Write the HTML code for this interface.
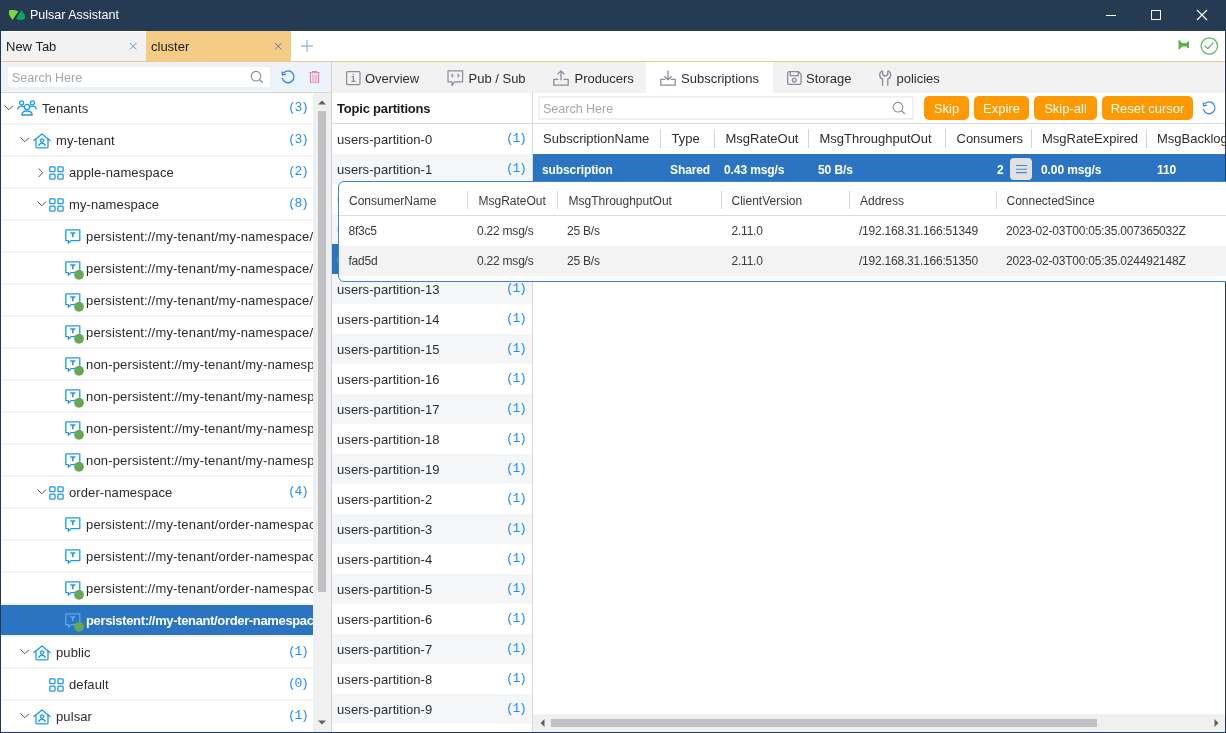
<!DOCTYPE html>
<html><head><meta charset="utf-8"><style>
*{margin:0;padding:0;box-sizing:border-box}
html,body{width:1226px;height:733px;overflow:hidden;background:#233a52;font-family:"Liberation Sans",sans-serif;font-size:13px;color:#333}
.a{position:absolute}
.t{position:absolute;white-space:nowrap}
.m{font-family:"Liberation Mono",monospace;color:#1f90fb;font-size:13px;letter-spacing:-1.3px}
svg{position:absolute;overflow:visible}
</style></head><body><div id="root" style="position:absolute;left:0;top:0;width:1226px;height:733px;overflow:hidden;will-change:transform">
<div class="a" style="left:0;top:0;width:1226px;height:31px;background:#243b53"></div>
<svg style="left:0;top:0" width="30" height="30" viewBox="0 0 30 30"><path d="M9 10.6 Q9.2 10 10 10 L14 9.9 Q16.5 10.3 18.3 11.4 L12.4 20 L9.6 15.6 Q9 14.8 9 14 Z" fill="#7dd63a"/><path d="M21.5 10 L25.1 15.8 V18.6 Q23.5 19.9 20.8 20 Q18 19.9 16.1 18.7 Z" fill="#09a857"/></svg>
<div class="t" style="left:30px;top:0;line-height:31px;font-size:12.5px;color:#fff">Pulsar Assistant</div>
<div class="a" style="left:1106px;top:15px;width:10px;height:1px;background:#fff"></div>
<div class="a" style="left:1151px;top:10px;width:10px;height:10px;border:1px solid #fff"></div>
<svg style="left:1197px;top:10px" width="10" height="10"><path d="M0 0L10 10M10 0L0 10" stroke="#fff" stroke-width="1.1"/></svg>
<div class="a" style="left:1px;top:31px;width:1224px;height:701px;background:#fff"></div>
<div class="a" style="left:1px;top:32px;width:145px;height:29px;background:#f2f2f2"></div>
<div class="t" style="left:6px;top:32px;line-height:29px;color:#222">New Tab</div>
<svg style="left:130px;top:43px" width="7" height="7"><path d="M0 0L6.5 6.5M6.5 0L0 6.5" stroke="#5b9bd9" stroke-width="1"/></svg>
<div class="a" style="left:146px;top:31px;width:145px;height:30px;background:#f4cc85"></div>
<div class="t" style="left:151px;top:32px;line-height:29px;color:#222">cluster</div>
<svg style="left:275px;top:43px" width="7" height="7"><path d="M0 0L6.5 6.5M6.5 0L0 6.5" stroke="#5d7fa6" stroke-width="1"/></svg>
<svg style="left:301px;top:40px" width="12" height="12"><path d="M6 0V12M0 6H12" stroke="#9cc0e6" stroke-width="1.4"/></svg>
<div class="a" style="left:1px;top:61px;width:1224px;height:1px;background:#f3c683"></div>
<svg style="left:1178px;top:40px" width="12" height="10" viewBox="0 0 12 10"><path d="M0.5 0 L2 0.6 L4 3 L8.6 3 L9.6 1.4 L11 1.2 L11 8.2 L9.6 8 L8.6 6.5 L4 6.5 L2 9 L0.5 9.5 Z" fill="#5db446"/></svg>
<svg style="left:1200px;top:37px" width="19" height="18" viewBox="0 0 19 18"><circle cx="9.3" cy="9" r="8.2" fill="none" stroke="#5cb85c" stroke-width="1.2"/><path d="M4.6 8.6 L7.7 11.6 L13.5 5.4" fill="none" stroke="#5cb85c" stroke-width="1.3"/></svg>
<div class="a" style="left:1px;top:62px;width:330px;height:30px;background:#edf3fb"></div>
<div class="a" style="left:1px;top:92px;width:330px;height:1px;background:#d5d9de"></div>
<div class="a" style="left:6px;top:65px;width:266px;height:24px;background:#f0f0f0"></div>
<div class="a" style="left:8px;top:67px;width:262px;height:20px;background:#fff"></div>
<div class="t" style="left:12px;top:68px;line-height:20px;font-size:12.5px;color:#a6a6a6">Search Here</div>
<svg style="left:250px;top:70px" width="14" height="14" viewBox="0 0 14 14"><circle cx="6" cy="6.2" r="4.8" fill="none" stroke="#8c8c8c" stroke-width="1.1"/><path d="M9.5 9.7 L12.8 12.8" stroke="#8c8c8c" stroke-width="1.2"/></svg>
<svg style="left:281px;top:70px" width="14" height="14" viewBox="0 0 14 14"><path d="M1.3 8.2 A5.9 5.9 0 1 0 2.4 3.2" fill="none" stroke="#2f80d6" stroke-width="1.3"/><path d="M1 1.5 L1.6 5 L5 4.2" fill="none" stroke="#2f80d6" stroke-width="1.3"/></svg>
<svg style="left:309px;top:71px" width="11" height="12" viewBox="0 0 11 12"><path d="M0.3 1.7 H10.7 M3.5 1.7 V0.5 H7.5 V1.7" fill="none" stroke="#e27ba1" stroke-width="1.1"/><path d="M1.4 2.2 V11.3 H9.6 V2.2" fill="none" stroke="#e27ba1" stroke-width="1.1"/><path d="M3.4 3.5V10 M4.9 3.5V10 M6.3 3.5V10 M7.7 3.5V10" stroke="#eba3bd" stroke-width="0.9"/></svg>
<div class="a" style="left:1px;top:93px;width:312px;height:639px;overflow:hidden">
<div class="a" style="left:0;top:0px;width:312px;height:31px;background:#fff"></div>
<div class="a" style="left:0;top:30px;width:312px;height:2px;background:#f3f3f3"></div>
<svg style="left:3px;top:12px" width="10" height="6" viewBox="0 0 10 6"><path d="M0.5 0.5 L4.8 4.8 L9.1 0.5" fill="none" stroke="#555" stroke-width="1"/></svg>
<svg style="left:16px;top:7px" width="20" height="16" viewBox="0 0 20 16" fill="none" stroke="#1d9be6" stroke-width="1.3"><circle cx="10" cy="7" r="2.6"/><path d="M4.9 15 Q5 11 10 11 Q15 11 15.1 15 Z"/><circle cx="4.6" cy="2.9" r="2"/><path d="M0.8 9.6 Q0.9 6.2 4.6 6.2 Q6.2 6.2 7.3 7"/><circle cx="15.4" cy="2.9" r="2"/><path d="M19.2 9.6 Q19.1 6.2 15.4 6.2 Q13.8 6.2 12.7 7"/></svg>
<div class="t" style="left:41px;top:0px;line-height:32px;color:#2b2b2b;font-weight:normal;letter-spacing:0.1px">Tenants</div>
<div class="t m" style="left:287px;top:-1px;line-height:32px">(3)</div>
<div class="a" style="left:0;top:32px;width:312px;height:31px;background:#fff"></div>
<div class="a" style="left:0;top:62px;width:312px;height:2px;background:#f3f3f3"></div>
<svg style="left:19px;top:44px" width="10" height="6" viewBox="0 0 10 6"><path d="M0.5 0.5 L4.8 4.8 L9.1 0.5" fill="none" stroke="#555" stroke-width="1"/></svg>
<svg style="left:32px;top:40px" width="18" height="16" viewBox="0 0 18 16" fill="none" stroke="#1d9be6" stroke-width="1.3" stroke-linejoin="round" stroke-linecap="round"><path d="M0.9 7.6 L9 0.9 L17.1 7.6"/><path d="M3 6 V14 Q3 14.8 3.8 14.8 H14.2 Q15 14.8 15 14 V6"/><circle cx="9" cy="7.6" r="1.7"/><path d="M5.9 12.6 Q6 10.4 9 10.4 Q12 10.4 12.1 12.6"/></svg>
<div class="t" style="left:55px;top:32px;line-height:32px;color:#2b2b2b;font-weight:normal;letter-spacing:0.1px">my-tenant</div>
<div class="t m" style="left:287px;top:31px;line-height:32px">(3)</div>
<div class="a" style="left:0;top:64px;width:312px;height:31px;background:#fff"></div>
<div class="a" style="left:0;top:94px;width:312px;height:2px;background:#f3f3f3"></div>
<svg style="left:37px;top:75px" width="6" height="10" viewBox="0 0 6 10"><path d="M0.5 0.5 L4.8 4.8 L0.5 9.1" fill="none" stroke="#555" stroke-width="1"/></svg>
<svg style="left:48px;top:73px" width="15" height="14" viewBox="0 0 15 14" fill="none" stroke="#1d9be6" stroke-width="1.3"><rect x="0.8" y="0.8" width="5.2" height="4.9" rx="0.8"/><rect x="8.9" y="0.8" width="5.2" height="4.9" rx="0.8"/><rect x="0.8" y="8.2" width="5.2" height="4.9" rx="0.8"/><rect x="8.9" y="8.2" width="5.2" height="4.9" rx="0.8"/></svg>
<div class="t" style="left:68px;top:64px;line-height:32px;color:#2b2b2b;font-weight:normal;letter-spacing:0.1px">apple-namespace</div>
<div class="t m" style="left:287px;top:63px;line-height:32px">(2)</div>
<div class="a" style="left:0;top:96px;width:312px;height:31px;background:#fff"></div>
<div class="a" style="left:0;top:126px;width:312px;height:2px;background:#f3f3f3"></div>
<svg style="left:36px;top:108px" width="10" height="6" viewBox="0 0 10 6"><path d="M0.5 0.5 L4.8 4.8 L9.1 0.5" fill="none" stroke="#555" stroke-width="1"/></svg>
<svg style="left:48px;top:105px" width="15" height="14" viewBox="0 0 15 14" fill="none" stroke="#1d9be6" stroke-width="1.3"><rect x="0.8" y="0.8" width="5.2" height="4.9" rx="0.8"/><rect x="8.9" y="0.8" width="5.2" height="4.9" rx="0.8"/><rect x="0.8" y="8.2" width="5.2" height="4.9" rx="0.8"/><rect x="8.9" y="8.2" width="5.2" height="4.9" rx="0.8"/></svg>
<div class="t" style="left:68px;top:96px;line-height:32px;color:#2b2b2b;font-weight:normal;letter-spacing:0.1px">my-namespace</div>
<div class="t m" style="left:287px;top:95px;line-height:32px">(8)</div>
<div class="a" style="left:0;top:128px;width:312px;height:31px;background:#fff"></div>
<div class="a" style="left:0;top:158px;width:312px;height:2px;background:#f3f3f3"></div>
<svg style="left:64px;top:136px" width="16" height="16" viewBox="0 0 16 16" fill="none" stroke="#1d9be6" stroke-width="1.3"><path d="M0.8 0.8 H14.8 V11.6 H6 L3.4 14.2 V11.6 H0.8 Z" stroke-linejoin="round"/><path d="M5.3 4 H10.3 M7.8 4 V8.3" stroke-width="1.6"/></svg>
<div class="t" style="left:85px;top:128px;line-height:32px;color:#2b2b2b;font-weight:normal;letter-spacing:0.17px">persistent://my-tenant/my-namespace/users</div>
<div class="a" style="left:0;top:160px;width:312px;height:31px;background:#fff"></div>
<div class="a" style="left:0;top:190px;width:312px;height:2px;background:#f3f3f3"></div>
<svg style="left:64px;top:168px" width="16" height="16" viewBox="0 0 16 16" fill="none" stroke="#1d9be6" stroke-width="1.3"><path d="M0.8 0.8 H14.8 V11.6 H6 L3.4 14.2 V11.6 H0.8 Z" stroke-linejoin="round"/><path d="M5.3 4 H10.3 M7.8 4 V8.3" stroke-width="1.6"/><circle cx="14" cy="13.8" r="4.9" fill="#68a652" stroke="none"/></svg>
<div class="t" style="left:85px;top:160px;line-height:32px;color:#2b2b2b;font-weight:normal;letter-spacing:0.17px">persistent://my-tenant/my-namespace/users</div>
<div class="a" style="left:0;top:192px;width:312px;height:31px;background:#fff"></div>
<div class="a" style="left:0;top:222px;width:312px;height:2px;background:#f3f3f3"></div>
<svg style="left:64px;top:200px" width="16" height="16" viewBox="0 0 16 16" fill="none" stroke="#1d9be6" stroke-width="1.3"><path d="M0.8 0.8 H14.8 V11.6 H6 L3.4 14.2 V11.6 H0.8 Z" stroke-linejoin="round"/><path d="M5.3 4 H10.3 M7.8 4 V8.3" stroke-width="1.6"/><circle cx="14" cy="13.8" r="4.9" fill="#68a652" stroke="none"/></svg>
<div class="t" style="left:85px;top:192px;line-height:32px;color:#2b2b2b;font-weight:normal;letter-spacing:0.17px">persistent://my-tenant/my-namespace/users</div>
<div class="a" style="left:0;top:224px;width:312px;height:31px;background:#fff"></div>
<div class="a" style="left:0;top:254px;width:312px;height:2px;background:#f3f3f3"></div>
<svg style="left:64px;top:232px" width="16" height="16" viewBox="0 0 16 16" fill="none" stroke="#1d9be6" stroke-width="1.3"><path d="M0.8 0.8 H14.8 V11.6 H6 L3.4 14.2 V11.6 H0.8 Z" stroke-linejoin="round"/><path d="M5.3 4 H10.3 M7.8 4 V8.3" stroke-width="1.6"/><circle cx="14" cy="13.8" r="4.9" fill="#68a652" stroke="none"/></svg>
<div class="t" style="left:85px;top:224px;line-height:32px;color:#2b2b2b;font-weight:normal;letter-spacing:0.17px">persistent://my-tenant/my-namespace/users</div>
<div class="a" style="left:0;top:256px;width:312px;height:31px;background:#fff"></div>
<div class="a" style="left:0;top:286px;width:312px;height:2px;background:#f3f3f3"></div>
<svg style="left:64px;top:264px" width="16" height="16" viewBox="0 0 16 16" fill="none" stroke="#1d9be6" stroke-width="1.3"><path d="M0.8 0.8 H14.8 V11.6 H6 L3.4 14.2 V11.6 H0.8 Z" stroke-linejoin="round"/><path d="M5.3 4 H10.3 M7.8 4 V8.3" stroke-width="1.6"/><circle cx="14" cy="13.8" r="4.9" fill="#68a652" stroke="none"/></svg>
<div class="t" style="left:85px;top:256px;line-height:32px;color:#2b2b2b;font-weight:normal;letter-spacing:0.17px">non-persistent://my-tenant/my-namespace/users</div>
<div class="a" style="left:0;top:288px;width:312px;height:31px;background:#fff"></div>
<div class="a" style="left:0;top:318px;width:312px;height:2px;background:#f3f3f3"></div>
<svg style="left:64px;top:296px" width="16" height="16" viewBox="0 0 16 16" fill="none" stroke="#1d9be6" stroke-width="1.3"><path d="M0.8 0.8 H14.8 V11.6 H6 L3.4 14.2 V11.6 H0.8 Z" stroke-linejoin="round"/><path d="M5.3 4 H10.3 M7.8 4 V8.3" stroke-width="1.6"/><circle cx="14" cy="13.8" r="4.9" fill="#68a652" stroke="none"/></svg>
<div class="t" style="left:85px;top:288px;line-height:32px;color:#2b2b2b;font-weight:normal;letter-spacing:0.17px">non-persistent://my-tenant/my-namespace/users</div>
<div class="a" style="left:0;top:320px;width:312px;height:31px;background:#fff"></div>
<div class="a" style="left:0;top:350px;width:312px;height:2px;background:#f3f3f3"></div>
<svg style="left:64px;top:328px" width="16" height="16" viewBox="0 0 16 16" fill="none" stroke="#1d9be6" stroke-width="1.3"><path d="M0.8 0.8 H14.8 V11.6 H6 L3.4 14.2 V11.6 H0.8 Z" stroke-linejoin="round"/><path d="M5.3 4 H10.3 M7.8 4 V8.3" stroke-width="1.6"/><circle cx="14" cy="13.8" r="4.9" fill="#68a652" stroke="none"/></svg>
<div class="t" style="left:85px;top:320px;line-height:32px;color:#2b2b2b;font-weight:normal;letter-spacing:0.17px">non-persistent://my-tenant/my-namespace/users</div>
<div class="a" style="left:0;top:352px;width:312px;height:31px;background:#fff"></div>
<div class="a" style="left:0;top:382px;width:312px;height:2px;background:#f3f3f3"></div>
<svg style="left:64px;top:360px" width="16" height="16" viewBox="0 0 16 16" fill="none" stroke="#1d9be6" stroke-width="1.3"><path d="M0.8 0.8 H14.8 V11.6 H6 L3.4 14.2 V11.6 H0.8 Z" stroke-linejoin="round"/><path d="M5.3 4 H10.3 M7.8 4 V8.3" stroke-width="1.6"/><circle cx="14" cy="13.8" r="4.9" fill="#68a652" stroke="none"/></svg>
<div class="t" style="left:85px;top:352px;line-height:32px;color:#2b2b2b;font-weight:normal;letter-spacing:0.17px">non-persistent://my-tenant/my-namespace/users</div>
<div class="a" style="left:0;top:384px;width:312px;height:31px;background:#fff"></div>
<div class="a" style="left:0;top:414px;width:312px;height:2px;background:#f3f3f3"></div>
<svg style="left:36px;top:396px" width="10" height="6" viewBox="0 0 10 6"><path d="M0.5 0.5 L4.8 4.8 L9.1 0.5" fill="none" stroke="#555" stroke-width="1"/></svg>
<svg style="left:48px;top:393px" width="15" height="14" viewBox="0 0 15 14" fill="none" stroke="#1d9be6" stroke-width="1.3"><rect x="0.8" y="0.8" width="5.2" height="4.9" rx="0.8"/><rect x="8.9" y="0.8" width="5.2" height="4.9" rx="0.8"/><rect x="0.8" y="8.2" width="5.2" height="4.9" rx="0.8"/><rect x="8.9" y="8.2" width="5.2" height="4.9" rx="0.8"/></svg>
<div class="t" style="left:68px;top:384px;line-height:32px;color:#2b2b2b;font-weight:normal;letter-spacing:0.1px">order-namespace</div>
<div class="t m" style="left:287px;top:383px;line-height:32px">(4)</div>
<div class="a" style="left:0;top:416px;width:312px;height:31px;background:#fff"></div>
<div class="a" style="left:0;top:446px;width:312px;height:2px;background:#f3f3f3"></div>
<svg style="left:64px;top:424px" width="16" height="16" viewBox="0 0 16 16" fill="none" stroke="#1d9be6" stroke-width="1.3"><path d="M0.8 0.8 H14.8 V11.6 H6 L3.4 14.2 V11.6 H0.8 Z" stroke-linejoin="round"/><path d="M5.3 4 H10.3 M7.8 4 V8.3" stroke-width="1.6"/></svg>
<div class="t" style="left:85px;top:416px;line-height:32px;color:#2b2b2b;font-weight:normal;letter-spacing:0.17px">persistent://my-tenant/order-namespace/users</div>
<div class="a" style="left:0;top:448px;width:312px;height:31px;background:#fff"></div>
<div class="a" style="left:0;top:478px;width:312px;height:2px;background:#f3f3f3"></div>
<svg style="left:64px;top:456px" width="16" height="16" viewBox="0 0 16 16" fill="none" stroke="#1d9be6" stroke-width="1.3"><path d="M0.8 0.8 H14.8 V11.6 H6 L3.4 14.2 V11.6 H0.8 Z" stroke-linejoin="round"/><path d="M5.3 4 H10.3 M7.8 4 V8.3" stroke-width="1.6"/></svg>
<div class="t" style="left:85px;top:448px;line-height:32px;color:#2b2b2b;font-weight:normal;letter-spacing:0.17px">persistent://my-tenant/order-namespace/users</div>
<div class="a" style="left:0;top:480px;width:312px;height:31px;background:#fff"></div>
<div class="a" style="left:0;top:510px;width:312px;height:2px;background:#f3f3f3"></div>
<svg style="left:64px;top:488px" width="16" height="16" viewBox="0 0 16 16" fill="none" stroke="#1d9be6" stroke-width="1.3"><path d="M0.8 0.8 H14.8 V11.6 H6 L3.4 14.2 V11.6 H0.8 Z" stroke-linejoin="round"/><path d="M5.3 4 H10.3 M7.8 4 V8.3" stroke-width="1.6"/><circle cx="14" cy="13.8" r="4.9" fill="#68a652" stroke="none"/></svg>
<div class="t" style="left:85px;top:480px;line-height:32px;color:#2b2b2b;font-weight:normal;letter-spacing:0.17px">persistent://my-tenant/order-namespace/users</div>
<div class="a" style="left:0;top:512px;width:312px;height:31px;background:#2a74c1"></div>
<div class="a" style="left:0;top:542px;width:312px;height:2px;background:#f3f3f3"></div>
<svg style="left:64px;top:520px" width="16" height="16" viewBox="0 0 16 16" fill="none" stroke="#5aa9ee" stroke-width="1.3"><path d="M0.8 0.8 H14.8 V11.6 H6 L3.4 14.2 V11.6 H0.8 Z" stroke-linejoin="round"/><path d="M5.3 4 H10.3 M7.8 4 V8.3" stroke-width="1.6"/><circle cx="14" cy="13.8" r="4.9" fill="#68a652" stroke="none"/></svg>
<div class="t" style="left:85px;top:512px;line-height:32px;color:#fff;font-weight:bold;letter-spacing:-0.35px">persistent://my-tenant/order-namespace/users</div>
<div class="a" style="left:0;top:544px;width:312px;height:31px;background:#fff"></div>
<div class="a" style="left:0;top:574px;width:312px;height:2px;background:#f3f3f3"></div>
<svg style="left:19px;top:556px" width="10" height="6" viewBox="0 0 10 6"><path d="M0.5 0.5 L4.8 4.8 L9.1 0.5" fill="none" stroke="#555" stroke-width="1"/></svg>
<svg style="left:32px;top:552px" width="18" height="16" viewBox="0 0 18 16" fill="none" stroke="#1d9be6" stroke-width="1.3" stroke-linejoin="round" stroke-linecap="round"><path d="M0.9 7.6 L9 0.9 L17.1 7.6"/><path d="M3 6 V14 Q3 14.8 3.8 14.8 H14.2 Q15 14.8 15 14 V6"/><circle cx="9" cy="7.6" r="1.7"/><path d="M5.9 12.6 Q6 10.4 9 10.4 Q12 10.4 12.1 12.6"/></svg>
<div class="t" style="left:55px;top:544px;line-height:32px;color:#2b2b2b;font-weight:normal;letter-spacing:0.1px">public</div>
<div class="t m" style="left:287px;top:543px;line-height:32px">(1)</div>
<div class="a" style="left:0;top:576px;width:312px;height:31px;background:#fff"></div>
<div class="a" style="left:0;top:606px;width:312px;height:2px;background:#f3f3f3"></div>
<svg style="left:48px;top:585px" width="15" height="14" viewBox="0 0 15 14" fill="none" stroke="#1d9be6" stroke-width="1.3"><rect x="0.8" y="0.8" width="5.2" height="4.9" rx="0.8"/><rect x="8.9" y="0.8" width="5.2" height="4.9" rx="0.8"/><rect x="0.8" y="8.2" width="5.2" height="4.9" rx="0.8"/><rect x="8.9" y="8.2" width="5.2" height="4.9" rx="0.8"/></svg>
<div class="t" style="left:68px;top:576px;line-height:32px;color:#2b2b2b;font-weight:normal;letter-spacing:0.1px">default</div>
<div class="t m" style="left:287px;top:575px;line-height:32px">(0)</div>
<div class="a" style="left:0;top:608px;width:312px;height:31px;background:#fff"></div>
<div class="a" style="left:0;top:638px;width:312px;height:2px;background:#f3f3f3"></div>
<svg style="left:19px;top:620px" width="10" height="6" viewBox="0 0 10 6"><path d="M0.5 0.5 L4.8 4.8 L9.1 0.5" fill="none" stroke="#555" stroke-width="1"/></svg>
<svg style="left:32px;top:616px" width="18" height="16" viewBox="0 0 18 16" fill="none" stroke="#1d9be6" stroke-width="1.3" stroke-linejoin="round" stroke-linecap="round"><path d="M0.9 7.6 L9 0.9 L17.1 7.6"/><path d="M3 6 V14 Q3 14.8 3.8 14.8 H14.2 Q15 14.8 15 14 V6"/><circle cx="9" cy="7.6" r="1.7"/><path d="M5.9 12.6 Q6 10.4 9 10.4 Q12 10.4 12.1 12.6"/></svg>
<div class="t" style="left:55px;top:608px;line-height:32px;color:#2b2b2b;font-weight:normal;letter-spacing:0.1px">pulsar</div>
<div class="t m" style="left:287px;top:607px;line-height:32px">(1)</div>
</div>
<div class="a" style="left:313px;top:93px;width:18px;height:639px;background:#f0f0f0"></div>
<svg style="left:318px;top:100px" width="8" height="5"><path d="M0 4.5 L4 0.5 L8 4.5 Z" fill="#606060"/></svg>
<div class="a" style="left:318px;top:111px;width:8px;height:481px;background:#c1c1c5"></div>
<svg style="left:318px;top:720px" width="8" height="5"><path d="M0 0.5 L4 4.5 L8 0.5 Z" fill="#606060"/></svg>
<div class="a" style="left:331px;top:62px;width:1px;height:670px;background:#d2d2d2"></div>
<div class="a" style="left:332px;top:62px;width:893px;height:31px;background:#f2f2f2"></div>
<div class="a" style="left:646px;top:62px;width:127px;height:31px;background:#fff"></div>
<svg style="left:346px;top:71px" width="15" height="14" viewBox="0 0 15 14" fill="none" stroke="#8b8b9f" stroke-width="1.2"><rect x="0.6" y="0.6" width="13.4" height="13" rx="1"/><path d="M5.6 5.6 H7.4 V10.3 M5.4 10.4 H9.6" stroke-width="1.3"/><circle cx="7.3" cy="3.6" r="0.75" fill="#8b8b9f" stroke="none"/></svg>
<div class="t" style="left:365px;top:63px;line-height:31px;color:#2d2d2d">Overview</div>
<svg style="left:447px;top:70px" width="17" height="17" viewBox="0 0 17 17" fill="none" stroke="#8b8b9f" stroke-width="1.2"><path d="M1 0.8 H15.6 V11.8 H7.6 L5 15.4 V11.8 H1 Z" stroke-linejoin="round"/><path d="M6.2 3.8 L4.6 5.6 L6.2 7.4 M10.4 3.8 L12 5.6 L10.4 7.4"/></svg>
<div class="t" style="left:468.5px;top:63px;line-height:31px;color:#2d2d2d">Pub / Sub</div>
<svg style="left:553px;top:70px" width="16" height="16" viewBox="0 0 16 16" fill="none" stroke="#8b8b9f" stroke-width="1.3" stroke-linejoin="round"><path d="M8 1 V10.3 M4.4 4.4 L8 0.9 L11.6 4.4"/><path d="M5.4 9.4 H0.8 V15.2 H15.2 V9.4 H10.6"/></svg>
<div class="t" style="left:574.5px;top:63px;line-height:31px;color:#2d2d2d">Producers</div>
<svg style="left:660px;top:70px" width="16" height="16" viewBox="0 0 16 16" fill="none" stroke="#8b8b9f" stroke-width="1.3" stroke-linejoin="round"><path d="M8 0.5 V9.8 M4.4 6.3 L8 9.9 L11.6 6.3"/><path d="M5.4 9.4 H0.8 V15.2 H15.2 V9.4 H10.6"/></svg>
<div class="t" style="left:681px;top:63px;line-height:31px;color:#2d2d2d">Subscriptions</div>
<svg style="left:787px;top:71px" width="15" height="14" viewBox="0 0 15 14" fill="none" stroke="#8b8b9f" stroke-width="1.3"><path d="M2.2 0.7 H11.5 L14.1 3.3 V11.8 Q14.1 13.3 12.6 13.3 H2.2 Q0.7 13.3 0.7 11.8 V2.2 Q0.7 0.7 2.2 0.7 Z"/><path d="M3.3 0.7 V4.6 H11.2 V0.7"/><circle cx="7.3" cy="9" r="1.9"/></svg>
<div class="t" style="left:806px;top:63px;line-height:31px;color:#2d2d2d">Storage</div>
<svg style="left:879px;top:70px" width="13" height="16" viewBox="0 0 13 16" fill="none" stroke="#8b8b9f" stroke-width="1.3" stroke-linejoin="round"><path d="M3.6 0.8 Q0.7 1.8 0.7 5 Q0.7 8 3.6 9.2 V15.8 M8.8 0.8 Q11.7 1.8 11.7 5 Q11.7 8 8.8 9.2 V15.8"/><path d="M3.6 0.8 V3.6 Q3.6 6 6.2 6 Q8.8 6 8.8 3.6 V0.8"/></svg>
<div class="t" style="left:896.5px;top:63px;line-height:31px;color:#2d2d2d">policies</div>
<div class="t" style="left:337px;top:93px;line-height:31px;font-weight:bold;font-size:13px;letter-spacing:-0.2px;color:#1a1a1a">Topic partitions</div>
<div class="a" style="left:332px;top:123px;width:201px;height:1px;background:#d9d9d9"></div>
<div class="a" style="left:532px;top:92px;width:1px;height:640px;background:#d9d9d9"></div>
<div class="a" style="left:332px;top:124px;width:200px;height:30px;background:#fff"></div>
<div class="t" style="left:337px;top:125px;line-height:30px;color:#2b2b2b;letter-spacing:0.08px">users-partition-0</div>
<div class="t m" style="left:506px;top:124px;line-height:30px;">(1)</div>
<div class="a" style="left:332px;top:154px;width:200px;height:30px;background:#f5f6f8"></div>
<div class="t" style="left:337px;top:155px;line-height:30px;color:#2b2b2b;letter-spacing:0.08px">users-partition-1</div>
<div class="t m" style="left:506px;top:154px;line-height:30px;">(1)</div>
<div class="a" style="left:332px;top:184px;width:200px;height:30px;background:#fff"></div>
<div class="t" style="left:337px;top:185px;line-height:30px;color:#2b2b2b;letter-spacing:0.08px">users-partition-10</div>
<div class="t m" style="left:506px;top:184px;line-height:30px;">(1)</div>
<div class="a" style="left:332px;top:214px;width:200px;height:30px;background:#f5f6f8"></div>
<div class="t" style="left:337px;top:215px;line-height:30px;color:#2b2b2b;letter-spacing:0.08px">users-partition-11</div>
<div class="t m" style="left:506px;top:214px;line-height:30px;">(1)</div>
<div class="a" style="left:332px;top:244px;width:200px;height:30px;background:#2a74c1"></div>
<div class="t" style="left:337px;top:245px;line-height:30px;color:#fff;letter-spacing:0.08px">users-partition-12</div>
<div class="t m" style="left:506px;top:244px;line-height:30px;color:#fff">(1)</div>
<div class="a" style="left:332px;top:274px;width:200px;height:30px;background:#f5f6f8"></div>
<div class="t" style="left:337px;top:275px;line-height:30px;color:#2b2b2b;letter-spacing:0.08px">users-partition-13</div>
<div class="t m" style="left:506px;top:274px;line-height:30px;">(1)</div>
<div class="a" style="left:332px;top:304px;width:200px;height:30px;background:#fff"></div>
<div class="t" style="left:337px;top:305px;line-height:30px;color:#2b2b2b;letter-spacing:0.08px">users-partition-14</div>
<div class="t m" style="left:506px;top:304px;line-height:30px;">(1)</div>
<div class="a" style="left:332px;top:334px;width:200px;height:30px;background:#f5f6f8"></div>
<div class="t" style="left:337px;top:335px;line-height:30px;color:#2b2b2b;letter-spacing:0.08px">users-partition-15</div>
<div class="t m" style="left:506px;top:334px;line-height:30px;">(1)</div>
<div class="a" style="left:332px;top:364px;width:200px;height:30px;background:#fff"></div>
<div class="t" style="left:337px;top:365px;line-height:30px;color:#2b2b2b;letter-spacing:0.08px">users-partition-16</div>
<div class="t m" style="left:506px;top:364px;line-height:30px;">(1)</div>
<div class="a" style="left:332px;top:394px;width:200px;height:30px;background:#f5f6f8"></div>
<div class="t" style="left:337px;top:395px;line-height:30px;color:#2b2b2b;letter-spacing:0.08px">users-partition-17</div>
<div class="t m" style="left:506px;top:394px;line-height:30px;">(1)</div>
<div class="a" style="left:332px;top:424px;width:200px;height:30px;background:#fff"></div>
<div class="t" style="left:337px;top:425px;line-height:30px;color:#2b2b2b;letter-spacing:0.08px">users-partition-18</div>
<div class="t m" style="left:506px;top:424px;line-height:30px;">(1)</div>
<div class="a" style="left:332px;top:454px;width:200px;height:30px;background:#f5f6f8"></div>
<div class="t" style="left:337px;top:455px;line-height:30px;color:#2b2b2b;letter-spacing:0.08px">users-partition-19</div>
<div class="t m" style="left:506px;top:454px;line-height:30px;">(1)</div>
<div class="a" style="left:332px;top:484px;width:200px;height:30px;background:#fff"></div>
<div class="t" style="left:337px;top:485px;line-height:30px;color:#2b2b2b;letter-spacing:0.08px">users-partition-2</div>
<div class="t m" style="left:506px;top:484px;line-height:30px;">(1)</div>
<div class="a" style="left:332px;top:514px;width:200px;height:30px;background:#f5f6f8"></div>
<div class="t" style="left:337px;top:515px;line-height:30px;color:#2b2b2b;letter-spacing:0.08px">users-partition-3</div>
<div class="t m" style="left:506px;top:514px;line-height:30px;">(1)</div>
<div class="a" style="left:332px;top:544px;width:200px;height:30px;background:#fff"></div>
<div class="t" style="left:337px;top:545px;line-height:30px;color:#2b2b2b;letter-spacing:0.08px">users-partition-4</div>
<div class="t m" style="left:506px;top:544px;line-height:30px;">(1)</div>
<div class="a" style="left:332px;top:574px;width:200px;height:30px;background:#f5f6f8"></div>
<div class="t" style="left:337px;top:575px;line-height:30px;color:#2b2b2b;letter-spacing:0.08px">users-partition-5</div>
<div class="t m" style="left:506px;top:574px;line-height:30px;">(1)</div>
<div class="a" style="left:332px;top:604px;width:200px;height:30px;background:#fff"></div>
<div class="t" style="left:337px;top:605px;line-height:30px;color:#2b2b2b;letter-spacing:0.08px">users-partition-6</div>
<div class="t m" style="left:506px;top:604px;line-height:30px;">(1)</div>
<div class="a" style="left:332px;top:634px;width:200px;height:30px;background:#f5f6f8"></div>
<div class="t" style="left:337px;top:635px;line-height:30px;color:#2b2b2b;letter-spacing:0.08px">users-partition-7</div>
<div class="t m" style="left:506px;top:634px;line-height:30px;">(1)</div>
<div class="a" style="left:332px;top:664px;width:200px;height:30px;background:#fff"></div>
<div class="t" style="left:337px;top:665px;line-height:30px;color:#2b2b2b;letter-spacing:0.08px">users-partition-8</div>
<div class="t m" style="left:506px;top:664px;line-height:30px;">(1)</div>
<div class="a" style="left:332px;top:694px;width:200px;height:30px;background:#f5f6f8"></div>
<div class="t" style="left:337px;top:695px;line-height:30px;color:#2b2b2b;letter-spacing:0.08px">users-partition-9</div>
<div class="t m" style="left:506px;top:694px;line-height:30px;">(1)</div>
<div class="a" style="left:538px;top:96px;width:376px;height:24px;background:#f0f0f0"></div>
<div class="a" style="left:540px;top:98px;width:372px;height:20px;background:#fff"></div>
<div class="t" style="left:543px;top:98px;line-height:23px;font-size:12.5px;color:#a6a6a6">Search Here</div>
<svg style="left:892px;top:101px" width="14" height="14" viewBox="0 0 14 14"><circle cx="6" cy="6.2" r="4.8" fill="none" stroke="#8c8c8c" stroke-width="1.1"/><path d="M9.5 9.7 L12.8 12.8" stroke="#8c8c8c" stroke-width="1.2"/></svg>
<div class="a" style="left:924px;top:96px;width:45px;height:24px;background:#ff9900;border-radius:5px;color:#fff;text-align:center;line-height:26px;font-size:13px">Skip</div>
<div class="a" style="left:974px;top:96px;width:55px;height:24px;background:#ff9900;border-radius:5px;color:#fff;text-align:center;line-height:26px;font-size:13px">Expire</div>
<div class="a" style="left:1034px;top:96px;width:63px;height:24px;background:#ff9900;border-radius:5px;color:#fff;text-align:center;line-height:26px;font-size:13px">Skip-all</div>
<div class="a" style="left:1102px;top:96px;width:91px;height:24px;background:#ff9900;border-radius:5px;color:#fff;text-align:center;line-height:26px;font-size:13px">Reset cursor</div>
<svg style="left:1202px;top:101px" width="14" height="14" viewBox="0 0 14 14"><path d="M1.3 8.2 A5.9 5.9 0 1 0 2.4 3.2" fill="none" stroke="#3a8ee0" stroke-width="1.3"/><path d="M1 1.5 L1.6 5 L5 4.2" fill="none" stroke="#3a8ee0" stroke-width="1.3"/></svg>
<div class="a" style="left:533px;top:123px;width:692px;height:1px;background:#dcdcdc"></div>
<div class="t" style="left:543px;top:124px;line-height:30px;color:#2d2d2d">SubscriptionName</div>
<div class="t" style="left:671.5px;top:124px;line-height:30px;color:#2d2d2d">Type</div>
<div class="t" style="left:725.5px;top:124px;line-height:30px;color:#2d2d2d">MsgRateOut</div>
<div class="t" style="left:819.5px;top:124px;line-height:30px;color:#2d2d2d">MsgThroughputOut</div>
<div class="t" style="left:956.5px;top:124px;line-height:30px;color:#2d2d2d">Consumers</div>
<div class="t" style="left:1042px;top:124px;line-height:30px;color:#2d2d2d">MsgRateExpired</div>
<div class="t" style="left:1157px;top:124px;line-height:30px;color:#2d2d2d">MsgBacklog</div>
<div class="a" style="left:660px;top:129px;width:1px;height:19px;background:#d6d6d6"></div>
<div class="a" style="left:714px;top:129px;width:1px;height:19px;background:#d6d6d6"></div>
<div class="a" style="left:808px;top:129px;width:1px;height:19px;background:#d6d6d6"></div>
<div class="a" style="left:945px;top:129px;width:1px;height:19px;background:#d6d6d6"></div>
<div class="a" style="left:1031px;top:129px;width:1px;height:19px;background:#d6d6d6"></div>
<div class="a" style="left:1146px;top:129px;width:1px;height:19px;background:#d6d6d6"></div>
<div class="a" style="left:533px;top:154px;width:692px;height:30px;background:#2a74c1"></div>
<div class="t" style="left:542px;top:155px;line-height:30px;color:#fff;font-weight:bold;font-size:12px;letter-spacing:-0.1px">subscription</div>
<div class="t" style="left:670px;top:155px;line-height:30px;color:#fff;font-weight:bold;font-size:12px;letter-spacing:-0.1px">Shared</div>
<div class="t" style="left:724px;top:155px;line-height:30px;color:#fff;font-weight:bold;font-size:12px;letter-spacing:-0.1px">0.43 msg/s</div>
<div class="t" style="left:818px;top:155px;line-height:30px;color:#fff;font-weight:bold;font-size:12px;letter-spacing:-0.1px">50 B/s</div>
<div class="t" style="left:1041px;top:155px;line-height:30px;color:#fff;font-weight:bold;font-size:12px;letter-spacing:-0.1px">0.00 msg/s</div>
<div class="t" style="left:1157px;top:155px;line-height:30px;color:#fff;font-weight:bold;font-size:12px;letter-spacing:-0.1px">110</div>
<div class="t" style="left:997px;top:155px;line-height:30px;color:#fff;font-weight:bold;font-size:12px">2</div>
<div class="a" style="left:1010px;top:158px;width:22px;height:22px;background:#e1e1e1;border-radius:4px"></div>
<svg style="left:1016px;top:164px" width="11" height="10"><path d="M0 1.5H11 M0 5.2H11 M0 8.6H11" stroke="#4a86cf" stroke-width="1.1"/></svg>
<div class="a" style="left:338px;top:181px;width:900px;height:101px;border:1px solid #3a86d3;border-radius:6px;background:#fff;overflow:hidden">
<div class="a" style="left:0;top:33px;width:900px;height:1px;background:#dcdcdc"></div>
<div class="a" style="left:0;top:64px;width:900px;height:30px;background:#f3f3f3"></div>
<div class="t" style="left:10px;top:3px;line-height:33px;font-size:12px;color:#3a3a3a">ConsumerName</div>
<div class="t" style="left:139.5px;top:3px;line-height:33px;font-size:12px;color:#3a3a3a">MsgRateOut</div>
<div class="t" style="left:229.5px;top:3px;line-height:33px;font-size:12px;color:#3a3a3a">MsgThroughputOut</div>
<div class="t" style="left:392.5px;top:3px;line-height:33px;font-size:12px;color:#3a3a3a">ClientVersion</div>
<div class="t" style="left:521px;top:3px;line-height:33px;font-size:12px;color:#3a3a3a">Address</div>
<div class="t" style="left:667.5px;top:3px;line-height:33px;font-size:12px;color:#3a3a3a">ConnectedSince</div>
<div class="a" style="left:128px;top:9px;width:1px;height:18px;background:#d9d9d9"></div>
<div class="a" style="left:218px;top:9px;width:1px;height:18px;background:#d9d9d9"></div>
<div class="a" style="left:382px;top:9px;width:1px;height:18px;background:#d9d9d9"></div>
<div class="a" style="left:510px;top:9px;width:1px;height:18px;background:#d9d9d9"></div>
<div class="a" style="left:657px;top:9px;width:1px;height:18px;background:#d9d9d9"></div>
<div class="t" style="left:9.5px;top:34px;line-height:31px;font-size:12px;color:#3a3a3a;letter-spacing:-0.22px">8f3c5</div>
<div class="t" style="left:138px;top:34px;line-height:31px;font-size:12px;color:#3a3a3a;letter-spacing:-0.22px">0.22 msg/s</div>
<div class="t" style="left:228px;top:34px;line-height:31px;font-size:12px;color:#3a3a3a;letter-spacing:-0.22px">25 B/s</div>
<div class="t" style="left:392.5px;top:34px;line-height:31px;font-size:12px;color:#3a3a3a;letter-spacing:-0.22px">2.11.0</div>
<div class="t" style="left:520px;top:34px;line-height:31px;font-size:12px;color:#3a3a3a;letter-spacing:-0.22px">/192.168.31.166:51349</div>
<div class="t" style="left:667px;top:34px;line-height:31px;font-size:12px;color:#3a3a3a;letter-spacing:-0.22px">2023-02-03T00:05:35.007365032Z</div>
<div class="t" style="left:9.5px;top:64px;line-height:31px;font-size:12px;color:#3a3a3a;letter-spacing:-0.22px">fad5d</div>
<div class="t" style="left:138px;top:64px;line-height:31px;font-size:12px;color:#3a3a3a;letter-spacing:-0.22px">0.22 msg/s</div>
<div class="t" style="left:228px;top:64px;line-height:31px;font-size:12px;color:#3a3a3a;letter-spacing:-0.22px">25 B/s</div>
<div class="t" style="left:392.5px;top:64px;line-height:31px;font-size:12px;color:#3a3a3a;letter-spacing:-0.22px">2.11.0</div>
<div class="t" style="left:520px;top:64px;line-height:31px;font-size:12px;color:#3a3a3a;letter-spacing:-0.22px">/192.168.31.166:51350</div>
<div class="t" style="left:667px;top:64px;line-height:31px;font-size:12px;color:#3a3a3a;letter-spacing:-0.22px">2023-02-03T00:05:35.024492148Z</div>
</div>
<div class="a" style="left:533px;top:714px;width:692px;height:18px;background:#f0f0f0"></div>
<svg style="left:540px;top:719px" width="5" height="8"><path d="M4.5 0 L0.5 4 L4.5 8 Z" fill="#606060"/></svg>
<div class="a" style="left:551px;top:719px;width:546px;height:8px;background:#c1c1c5"></div>
<svg style="left:1214px;top:719px" width="5" height="8"><path d="M0.5 0 L4.5 4 L0.5 8 Z" fill="#606060"/></svg>
</div></body></html>
